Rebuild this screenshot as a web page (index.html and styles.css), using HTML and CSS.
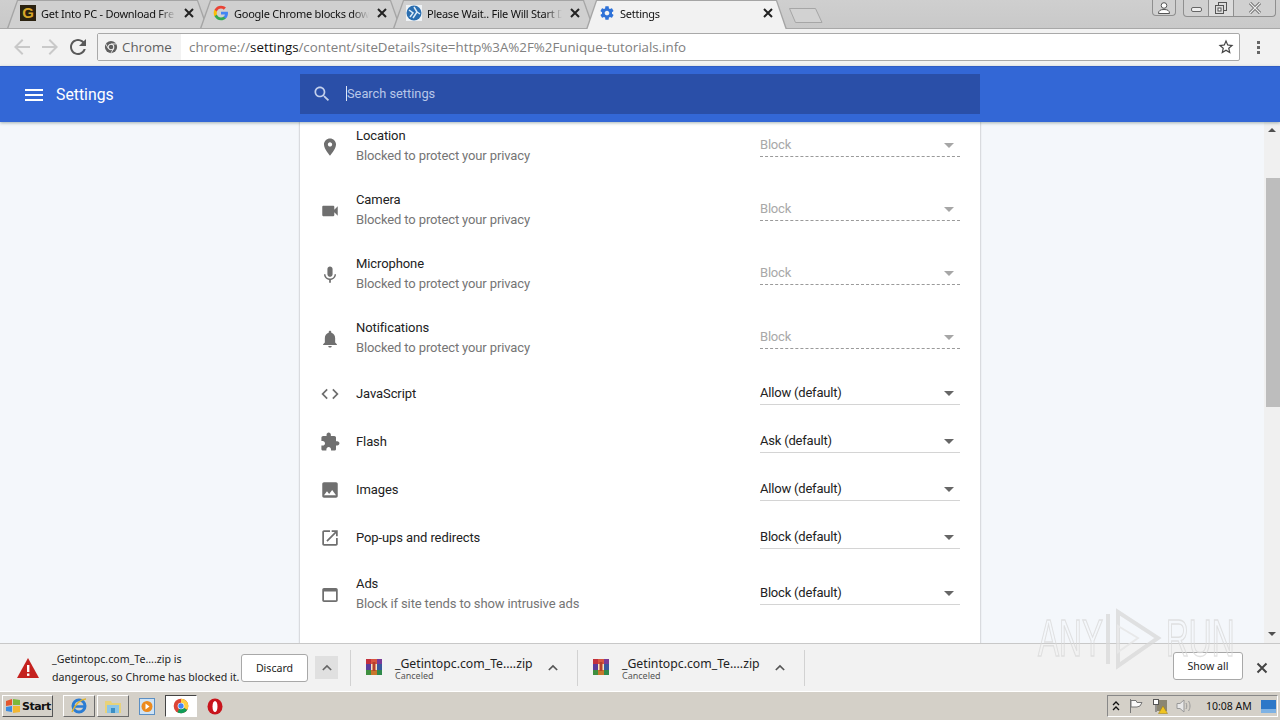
FILE: index.html
```html
<!DOCTYPE html>
<html lang="en">
<head>
<meta charset="utf-8">
<title>Settings</title>
<link rel="stylesheet" href="styles.css">
</head>
<body>
<div class="tabstrip">
  <div class="tab">
    <span class="fav fav-g">G</span>
    <span class="tab-title">Get Into PC - Download Fre</span>
    <svg class="tab-x" viewBox="0 0 10 10"><path d="M1 1l8 8M9 1L1 9"/></svg>
  </div>
  <div class="tab">
    <svg class="fav" viewBox="0 0 48 48"><path fill="#4285F4" d="M45 24.5c0-1.6-.1-3-.4-4.500H24v8.500h11.800c-.5 2.800-2 5.100-4.400 6.700v5.500h7.100c4.100-3.800 6.500-9.400 6.500-16.200z"/><path fill="#34A853" d="M24 46c5.900 0 10.900-2 14.500-5.300l-7.100-5.500c-2 1.300-4.500 2.100-7.400 2.100-5.700 0-10.500-3.800-12.200-9H4.500v5.700C8.100 41.100 15.500 46 24 46z"/><path fill="#FBBC05" d="M11.800 28.300c-.4-1.300-.7-2.800-.7-4.300s.3-3 .7-4.300V14H4.500C3 17 2 20.400 2 24s1 7 2.500 10z"/><path fill="#EA4335" d="M24 10.700c3.200 0 6.100 1.100 8.400 3.300l6.300-6.300C34.900 4.100 29.900 2 24 2 15.500 2 8.100 6.900 4.500 14l7.300 5.700c1.700-5.200 6.500-9 12.200-9z"/></svg>
    <span class="tab-title">Google Chrome blocks down</span>
    <svg class="tab-x" viewBox="0 0 10 10"><path d="M1 1l8 8M9 1L1 9"/></svg>
  </div>
  <div class="tab">
    <svg class="fav" viewBox="0 0 16 16"><rect width="16" height="16" fill="#eef2f5"/><circle cx="8" cy="8" r="7.500" fill="#2a6eb0"/><path d="M3 5l4 3-3 4M8 2l3 5-4 6M11 7l3 2" stroke="#dcebf7" stroke-width="1.500" fill="none"/></svg>
    <span class="tab-title">Please Wait.. File Will Start D</span>
    <svg class="tab-x" viewBox="0 0 10 10"><path d="M1 1l8 8M9 1L1 9"/></svg>
  </div>
  <div class="tab tab-active">
    <svg class="fav" viewBox="0 0 24 24"><path fill="#2f72d8" d="M19.430 12.980c.04-.32.07-.64.07-.98s-.03-.66-.07-.98l2.110-1.650c.19-.15.24-.42.12-.64l-2-3.460c-.12-.22-.39-.3-.61-.22l-2.490 1c-.52-.4-1.080-.73-1.690-.98l-.38-2.650C14.460 2.180 14.250 2 14 2h-4c-.25 0-.46.18-.49.42l-.38 2.650c-.61.25-1.170.59-1.690.98l-2.490-1c-.23-.09-.49 0-.61.22l-2 3.460c-.13.22-.07.49.12.64l2.110 1.650c-.04.32-.07.65-.07.98s.03.66.07.98l-2.110 1.650c-.19.15-.24.42-.12.64l2 3.460c.12.22.39.3.61.22l2.490-1c.52.4 1.080.73 1.690.98l.38 2.650c.03.24.24.42.49.42h4c.25 0 .46-.18.49-.42l.38-2.650c.61-.25 1.170-.59 1.690-.98l2.490 1c.23.09.49 0 .61-.22l2-3.460c.12-.22.07-.49-.12-.64l-2.110-1.650zM12 15.500c-1.930 0-3.500-1.570-3.500-3.500s1.570-3.500 3.500-3.500 3.500 1.570 3.500 3.500-1.570 3.500-3.500 3.500z"/></svg>
    <span class="tab-title">Settings</span>
    <svg class="tab-x" viewBox="0 0 10 10"><path d="M1 1l8 8M9 1L1 9"/></svg>
  </div>
  <svg class="newtab" width="36" height="17" viewBox="0 0 36 17"><path d="M1.500 1.500H27.500L34 15.500H7.500z" fill="#d2d2d2" stroke="#a6a6a6"/></svg>
  <div class="winbtns">
    <div class="wb wb-user"><svg width="14" height="14" viewBox="0 0 14 14"><circle cx="7" cy="4.500" r="2.800" fill="#fff" stroke="#555"/><path d="M1.500 12.500c0-3 2-4 5.500-4s5.500 1 5.500 4z" fill="#fff" stroke="#555"/></svg></div>
    <div class="wb-group">
      <div class="wb wb-min"><span class="min-glyph"></span></div>
      <div class="wb wb-max"><svg width="14" height="14" viewBox="0 0 14 14"><rect x="4.500" y="1.500" width="8" height="8" fill="#ddd" stroke="#555"/><rect x="1.500" y="4.500" width="8" height="8" fill="#ddd" stroke="#555"/><rect x="4" y="7" width="3" height="3" fill="#fff" stroke="#555"/></svg></div>
      <div class="wb wb-close"><svg width="14" height="12" viewBox="0 0 14 12"><path d="M2 1l10 10M12 1L2 11" stroke="#666" stroke-width="3"/><path d="M2 1l10 10M12 1L2 11" stroke="#eee" stroke-width="1.200"/></svg></div>
    </div>
  </div>
</div>

<div class="toolbar">
  <svg class="tool tool-off" viewBox="0 0 24 24"><path d="M20 11H7.830l5.590-5.590L12 4l-8 8 8 8 1.410-1.410L7.830 13H20v-2z"/></svg>
  <svg class="tool tool-off" viewBox="0 0 24 24"><path d="M12 4l-1.410 1.410L16.170 11H4v2h12.170l-5.580 5.590L12 20l8-8z"/></svg>
  <svg class="tool" viewBox="0 0 24 24"><path d="M17.650 6.350C16.200 4.900 14.210 4 12 4c-4.420 0-7.990 3.580-7.990 8s3.570 8 7.990 8c3.730 0 6.840-2.550 7.730-6h-2.080c-.82 2.330-3.040 4-5.650 4-3.310 0-6-2.690-6-6s2.690-6 6-6c1.660 0 3.140.69 4.220 1.780L13 11h7V4l-2.350 2.350z"/></svg>
  <div class="omnibox">
    <div class="chip">
      <svg class="chip-ico" viewBox="0 0 16 16"><circle cx="8" cy="8" r="7" fill="#5f5f5f"/><circle cx="8" cy="8" r="3.200" fill="#5f5f5f" stroke="#f2f2f2" stroke-width="1.200"/><path d="M8 4.500h6M5 9.800L2 4.500M11 9.800l-3 5" stroke="#f2f2f2"/></svg>
      <span>Chrome</span>
    </div>
    <div class="url">chrome://<b>settings</b>/content/siteDetails?site=http%3A%2F%2Funique-tutorials.info</div>
    <svg class="star" viewBox="0 0 24 24"><path d="M22 9.240l-7.190-.62L12 2 9.190 8.630 2 9.240l5.460 4.730L5.820 21 12 17.270 18.180 21l-1.630-7.030L22 9.240zM12 15.400l-3.760 2.270 1-4.280-3.320-2.880 4.380-.38L12 6.100l1.710 4.040 4.380.38-3.320 2.880 1 4.280L12 15.400z"/></svg>
  </div>
  <div class="dots"><i></i><i></i><i></i></div>
</div>

<header class="header">
  <div class="header-left">
    <svg class="hd-ico" viewBox="0 0 24 24"><path d="M3 18h18v-2H3v2zm0-5h18v-2H3v2zm0-7v2h18V6H3z"/></svg>
    <span class="hd-title">Settings</span>
  </div>
  <div class="searchbar">
    <svg class="search-ico" viewBox="0 0 24 24"><path d="M15.500 14h-.79l-.28-.27C15.410 12.590 16 11.110 16 9.500 16 5.910 13.090 3 9.500 3S3 5.910 3 9.500 5.910 16 9.500 16c1.610 0 3.090-.59 4.230-1.570l.27.28v.79l5 4.990L20.490 19l-4.990-5zm-6 0C7.010 14 5 11.990 5 9.500S7.010 5 9.500 5 14 7.010 14 9.500 11.990 14 9.500 14z"/></svg>
    <span class="caret"></span>
    <span class="search-ph">Search settings</span>
  </div>
</header>

<main class="main">
  <div class="scroller">
    <section class="card">
      <div class="row row-two">
        <svg class="row-ico" viewBox="0 0 24 24"><path d="M12 2C8.130 2 5 5.130 5 9c0 5.250 7 13 7 13s7-7.750 7-13c0-3.870-3.130-7-7-7zm0 9.500c-1.380 0-2.500-1.120-2.500-2.500s1.120-2.500 2.500-2.500 2.500 1.120 2.500 2.500-1.120 2.500-2.500 2.500z"/></svg>
        <div class="row-text"><div class="row-title">Location</div><div class="row-sub">Blocked to protect your privacy</div></div>
        <div class="select select-off"><span>Block</span><i class="arrow"></i></div>
      </div>
      <div class="row row-two">
        <svg class="row-ico" viewBox="0 0 24 24"><path d="M17 10.500V7c0-.55-.45-1-1-1H4c-.55 0-1 .45-1 1v10c0 .55.45 1 1 1h12c.55 0 1-.45 1-1v-3.500l4 4v-11l-4 4z"/></svg>
        <div class="row-text"><div class="row-title">Camera</div><div class="row-sub">Blocked to protect your privacy</div></div>
        <div class="select select-off"><span>Block</span><i class="arrow"></i></div>
      </div>
      <div class="row row-two">
        <svg class="row-ico" viewBox="0 0 24 24"><path d="M12 14c1.660 0 2.990-1.340 2.990-3L15 5c0-1.660-1.340-3-3-3S9 3.340 9 5v6c0 1.660 1.340 3 3 3zm5.300-3c0 3-2.540 5.100-5.300 5.100S6.700 14 6.700 11H5c0 3.410 2.720 6.230 6 6.720V21h2v-3.280c3.280-.48 6-3.300 6-6.720h-1.700z"/></svg>
        <div class="row-text"><div class="row-title">Microphone</div><div class="row-sub">Blocked to protect your privacy</div></div>
        <div class="select select-off"><span>Block</span><i class="arrow"></i></div>
      </div>
      <div class="row row-two">
        <svg class="row-ico" viewBox="0 0 24 24"><path d="M12 22c1.100 0 2-.9 2-2h-4c0 1.100.9 2 2 2zm6-6v-5c0-3.070-1.630-5.640-4.500-6.320V4c0-.83-.67-1.500-1.500-1.500s-1.500.67-1.500 1.500v.68C7.640 5.360 6 7.920 6 11v5l-2 2v1h16v-1l-2-2z"/></svg>
        <div class="row-text"><div class="row-title">Notifications</div><div class="row-sub">Blocked to protect your privacy</div></div>
        <div class="select select-off"><span>Block</span><i class="arrow"></i></div>
      </div>
      <div class="row">
        <svg class="row-ico" viewBox="0 0 24 24"><path d="M9.400 16.600L4.800 12l4.600-4.600L8 6l-6 6 6 6 1.400-1.400zm5.200 0l4.600-4.600-4.600-4.600L16 6l6 6-6 6-1.400-1.400z"/></svg>
        <div class="row-text"><div class="row-title">JavaScript</div></div>
        <div class="select"><span>Allow (default)</span><i class="arrow"></i></div>
      </div>
      <div class="row">
        <svg class="row-ico" viewBox="0 0 24 24"><path d="M20.500 11H19V7c0-1.100-.9-2-2-2h-4V3.500C13 2.120 11.880 1 10.500 1S8 2.120 8 3.500V5H4c-1.100 0-1.990.9-1.990 2v3.800H3.500c1.490 0 2.700 1.210 2.700 2.700s-1.210 2.700-2.700 2.700H2V20c0 1.100.9 2 2 2h3.800v-1.500c0-1.490 1.210-2.700 2.700-2.700 1.490 0 2.700 1.210 2.700 2.700V22H17c1.100 0 2-.9 2-2v-4h1.500c1.380 0 2.500-1.120 2.500-2.500S21.880 11 20.500 11z"/></svg>
        <div class="row-text"><div class="row-title">Flash</div></div>
        <div class="select"><span>Ask (default)</span><i class="arrow"></i></div>
      </div>
      <div class="row">
        <svg class="row-ico" viewBox="0 0 24 24"><path d="M21 19V5c0-1.100-.9-2-2-2H5c-1.100 0-2 .9-2 2v14c0 1.100.9 2 2 2h14c1.100 0 2-.9 2-2zM8.500 13.500l2.500 3.010L14.500 12l4.500 6H5l3.500-4.500z"/></svg>
        <div class="row-text"><div class="row-title">Images</div></div>
        <div class="select"><span>Allow (default)</span><i class="arrow"></i></div>
      </div>
      <div class="row">
        <svg class="row-ico" viewBox="0 0 24 24"><path d="M19 19H5V5h7V3H5c-1.110 0-2 .9-2 2v14c0 1.100.89 2 2 2h14c1.100 0 2-.9 2-2v-7h-2v7zM14 3v2h3.590l-9.830 9.830 1.410 1.410L19 6.410V10h2V3h-7z"/></svg>
        <div class="row-text"><div class="row-title">Pop-ups and redirects</div></div>
        <div class="select"><span>Block (default)</span><i class="arrow"></i></div>
      </div>
      <div class="row row-two">
        <svg class="row-ico" viewBox="0 0 24 24"><path d="M19 4H5c-1.110 0-2 .9-2 2v12c0 1.100.89 2 2 2h14c1.100 0 2-.9 2-2V6c0-1.100-.89-2-2-2zm0 14H5V8h14v10z"/></svg>
        <div class="row-text"><div class="row-title">Ads</div><div class="row-sub">Block if site tends to show intrusive ads</div></div>
        <div class="select"><span>Block (default)</span><i class="arrow"></i></div>
      </div>
      <div class="row row-two">
        <div class="row-ico"></div>
        <div class="row-text"><div class="row-title">Background sync</div></div>
      </div>
    </section>
  </div>
  <div class="scrollbar">
    <i class="sb-up"></i>
    <div class="sb-track"><div class="sb-thumb"></div></div>
    <i class="sb-down"></i>
  </div>
</main>

<footer class="shelf">
  <div class="dl-danger">
    <svg class="warn" width="24" height="22" viewBox="0 0 24 22"><path d="M12 1L23 21H1z" fill="#c5221f"/><rect x="11" y="8" width="2.400" height="7" fill="#fff"/><rect x="11" y="16.500" width="2.400" height="2.400" fill="#fff"/></svg>
    <div class="danger-text"><div>_Getintopc.com_Te....zip is</div><div>dangerous, so Chrome has blocked it.</div></div>
    <button class="btn btn-discard">Discard</button>
    <div class="chev-box"><svg class="chev" viewBox="0 0 12 8"><path d="M1 7l5-5 5 5" fill="none" stroke="#666" stroke-width="2"/></svg></div>
  </div>
  <div class="dl-item">
    <svg class="rar" viewBox="0 0 16 16"><rect x="0" y="0" width="5" height="5" fill="#c2303c"/><rect x="5" y="0" width="6" height="5" fill="#d8553f"/><rect x="11" y="0" width="5" height="5" fill="#7a3a96"/><rect x="0" y="5" width="5" height="6" fill="#5a3c9a"/><rect x="5" y="5" width="6" height="6" fill="#f4e6c0"/><rect x="11" y="5" width="5" height="6" fill="#39589e"/><rect x="0" y="11" width="5" height="5" fill="#3f8f3f"/><rect x="5" y="11" width="6" height="5" fill="#c9772c"/><rect x="11" y="11" width="5" height="5" fill="#2f8a4c"/><rect x="6.500" y="3" width="3" height="9" fill="#b5402c"/></svg>
    <div class="dl-text"><div class="dl-name">_Getintopc.com_Te....zip</div><div class="dl-status">Canceled</div></div>
    <svg class="chev" viewBox="0 0 12 8"><path d="M1 7l5-5 5 5" fill="none" stroke="#555" stroke-width="2"/></svg>
  </div>
  <div class="dl-item">
    <svg class="rar" viewBox="0 0 16 16"><rect x="0" y="0" width="5" height="5" fill="#c2303c"/><rect x="5" y="0" width="6" height="5" fill="#d8553f"/><rect x="11" y="0" width="5" height="5" fill="#7a3a96"/><rect x="0" y="5" width="5" height="6" fill="#5a3c9a"/><rect x="5" y="5" width="6" height="6" fill="#f4e6c0"/><rect x="11" y="5" width="5" height="6" fill="#39589e"/><rect x="0" y="11" width="5" height="5" fill="#3f8f3f"/><rect x="5" y="11" width="6" height="5" fill="#c9772c"/><rect x="11" y="11" width="5" height="5" fill="#2f8a4c"/><rect x="6.500" y="3" width="3" height="9" fill="#b5402c"/></svg>
    <div class="dl-text"><div class="dl-name">_Getintopc.com_Te....zip</div><div class="dl-status">Canceled</div></div>
    <svg class="chev" viewBox="0 0 12 8"><path d="M1 7l5-5 5 5" fill="none" stroke="#555" stroke-width="2"/></svg>
  </div>
  <div class="shelf-right">
    <button class="btn btn-showall">Show all</button>
    <svg class="shelf-x" viewBox="0 0 12 12"><path d="M1.500 1.500l9 9M10.500 1.500l-9 9" stroke="#444" stroke-width="2"/></svg>
  </div>
</footer>

<div class="taskbar">
  <button class="start">
    <svg width="16" height="16" viewBox="0 0 16 16"><path d="M1 3l6-2v6l-6 1z" fill="#e4572e"/><path d="M8 1l7 1v5l-7 0z" fill="#7cb83c"/><path d="M1 9l6-1v6l-6-1z" fill="#3b8be0"/><path d="M8 8h7v6l-7 1z" fill="#f2b632"/></svg>
    <span>Start</span>
  </button>
  <div class="quick quick-ie"><svg width="18" height="18" viewBox="0 0 18 18"><circle cx="9" cy="9" r="6" fill="none" stroke="#2b7cd3" stroke-width="3"/><path d="M3 9.500h12" stroke="#2b7cd3" stroke-width="2.500"/><path d="M2 15C5 7 11 2 16 2" stroke="#e0b431" stroke-width="1.500" fill="none"/></svg></div>
  <div class="quick"><svg width="18" height="16" viewBox="0 0 18 16"><path d="M1 3h6l1 2h9v10H1z" fill="#e8d27a"/><rect x="3" y="7" width="12" height="8" fill="#8cc6e8"/><rect x="7" y="10" width="4" height="5" fill="#3c8fc4"/></svg></div>
  <div class="tray-app tray-media"><svg width="16" height="17" viewBox="0 0 16 17"><rect x=".5" y=".5" width="15" height="16" fill="#cfe3f5" stroke="#5b8fc4"/><circle cx="8" cy="8.500" r="5.500" fill="#ec8a1e"/><path d="M6.500 5.500l4 3-4 3z" fill="#fff"/></svg></div>
  <div class="quick quick-on"><svg width="16" height="16" viewBox="0 0 48 48"><circle cx="24" cy="24" r="22" fill="#db4437"/><path d="M24 24L43 35A22 22 0 0 1 13 43z" fill="#0f9d58"/><path d="M24 2A22 22 0 0 1 43 35L24 24V2z" fill="#ffcd40"/><circle cx="24" cy="24" r="10" fill="#fff"/><circle cx="24" cy="24" r="8" fill="#4285f4"/></svg></div>
  <div class="tray-app tray-opera"><svg width="16" height="17" viewBox="0 0 16 17"><ellipse cx="8" cy="8.500" rx="7.500" ry="8" fill="#c8141c"/><ellipse cx="8" cy="8.500" rx="2.500" ry="5.500" fill="#fff"/></svg></div>
  <div class="tray">
    <svg class="tr-a" width="8" height="10" viewBox="0 0 8 10"><path d="M1 4l3-3 3 3M1 9l3-3 3 3" fill="none" stroke="#111" stroke-width="1.300"/></svg>
    <svg class="tr-b" width="16" height="16" viewBox="0 0 16 16"><path d="M2.500 1v14" stroke="#777"/><path d="M3 2.500h5l1 2h5L12 8l-3 1H3z" fill="#fafafa" stroke="#777"/></svg>
    <svg class="tr-c" width="16" height="16" viewBox="0 0 16 16"><rect x="5" y="2" width="10" height="11" fill="#8b8672"/><rect x="1.500" y="1.500" width="5" height="5" fill="#fff" stroke="#555"/><path d="M4 7v7" stroke="#555"/><path d="M11 8l4.500 7.500h-9z" fill="#f0c420" stroke="#9a7a10" stroke-width=".5"/></svg>
    <svg class="tr-d" width="16" height="16" viewBox="0 0 16 16"><path d="M1 5.500h3l4-3.500v12l-4-3.500H1z" fill="#e8e8e8" stroke="#999"/><path d="M10 5c1 1.500 1 4.500 0 6M12.500 3c2 3 2 7 0 10" fill="none" stroke="#999"/></svg>
    <span class="clock">10:08 AM</span>
    <svg class="tr-e" width="15" height="13" viewBox="0 0 15 13"><rect width="15" height="13" fill="#2d78c8"/><rect y="9" width="15" height="4" fill="#7eb2e4"/></svg>
  </div>
</div>

<div class="watermark">
  <span class="wm-text">ANY</span>
  <svg class="wm-play" width="58" height="62" viewBox="0 0 58 62"><path d="M4 6v50M14 4l40 26-40 28z" fill="none" stroke="#d9d9d9" stroke-width="4"/><path d="M14 18l20 12-20 14z" fill="none" stroke="#e4e4e4" stroke-width="2"/></svg>
  <span class="wm-text">RUN</span>
</div>
</body>
</html>
```
FILE: styles.css
```css
* { box-sizing: border-box; }
html, body { margin: 0; padding: 0; }
body {
  position: relative;
  width: 1280px;
  height: 720px;
  overflow: hidden;
  display: flex;
  flex-direction: column;
  font-family: Roboto, "Liberation Sans", sans-serif;
  background: #fff;
}
/* tab strip */
.tabstrip {
  height: 29px;
  flex: none;
  display: flex;
  align-items: flex-start;
  padding-left: 7px;
  background: linear-gradient(#cfcfcf, #c9c9c9);
  border-bottom: 1px solid #a8a8a8;
  position: relative;
}
.tab {
  position: relative;
  width: 201px;
  height: 28px;
  margin-right: -8px;
  padding: 0 0 2px 13px;
  display: flex;
  align-items: center;
  background: #a5a5a5;
  clip-path: polygon(10px 0, calc(100% - 10px) 0, 100% 100%, 0 100%);
  font-family: "Noto Sans", sans-serif;
  font-size: 11px;
  color: #111;
}
.tab::before {
  content: "";
  position: absolute;
  inset: 1px 0 0 0;
  background: #d0d0d0;
  clip-path: polygon(11px 0, calc(100% - 11px) 0, calc(100% - 1.500px) 100%, 1.500px 100%);
}
.tab > * { position: relative; }
.tab-active { z-index: 2; height: 29px; padding-bottom: 3px; }
.tab-active::before { background: #f2f2f2; }
.fav { width: 16px; height: 16px; flex: none; margin-right: 5px; }
.fav-g {
  display: block;
  background: #2b2210;
  color: #d8a628;
  font: bold 15px/16px "Liberation Sans", sans-serif;
  text-align: center;
}
.tab-title {
  width: 135px;
  flex: none;
  white-space: nowrap;
  overflow: hidden;
  letter-spacing: -.25px;
  -webkit-mask-image: linear-gradient(90deg, #000 118px, transparent 135px);
  mask-image: linear-gradient(90deg, #000 118px, transparent 135px);
}
.tab-x { width: 10px; height: 10px; flex: none; margin-left: 8px; fill: none; stroke: #222; stroke-width: 2; }
.newtab { margin: 7px 0 0 9px; flex: none; }
.winbtns { margin-left: auto; display: flex; gap: 7px; padding-right: 4px; }
.wb-group { display: flex; border: 1px solid #8f8f8f; border-top: 0; border-radius: 0 0 4px 4px; background: #d0d0d0; }
.wb { height: 16px; display: flex; align-items: center; justify-content: center; }
.wb-user { width: 24px; border: 1px solid #8f8f8f; border-top: 0; border-radius: 0 0 4px 4px; background: #d0d0d0; }
.wb-min { width: 25px; border-right: 1px solid #8f8f8f; }
.wb-max { width: 25px; border-right: 1px solid #8f8f8f; background: #dcdcdc; }
.wb-close { width: 41px; }
.min-glyph { width: 11px; height: 5px; border: 1px solid #666; border-radius: 2px; background: #eee; margin-top: 3px; }

/* toolbar */
.toolbar {
  height: 37px;
  flex: none;
  display: flex;
  align-items: center;
  padding: 0 0 1px 10px;
  background: #f2f2f2;
}
.tool { width: 24px; height: 24px; flex: none; margin-right: 4px; fill: #5a5a5a; }
.tool-off { fill: #c9c9c9; }
.omnibox {
  margin-left: 3px;
  width: 1143px;
  height: 28px;
  display: flex;
  align-items: center;
  background: #fff;
  border: 1px solid #a9a9a9;
  border-radius: 2px;
}
.chip {
  width: 83px;
  height: 26px;
  flex: none;
  display: flex;
  align-items: center;
  gap: 4px;
  padding-left: 6px;
  background: #f2f2f2;
  color: #5f5f5f;
  font-family: "Open Sans", sans-serif;
  font-size: 13.300px;
}
.chip-ico { width: 14px; height: 14px; }
.url {
  margin-left: 8px;
  font-family: "Open Sans", sans-serif;
  font-size: 13.320px;
  color: #808080;
  white-space: nowrap;
  flex: 1;
}
.url b { font-weight: 400; color: #111; }
.star { width: 18px; height: 18px; margin-right: 4px; flex: none; fill: #444; }
.dots { margin-left: 17px; display: flex; flex-direction: column; gap: 2px; }
.dots i { width: 3px; height: 3px; background: #666; display: block; }

/* header */
.header {
  height: 56px;
  flex: none;
  position: relative;
  z-index: 3;
  display: flex;
  align-items: center;
  background: #3367d6;
  border-top: 1px solid #2f5cc4;
  box-shadow: 0 1px 3px rgba(60, 90, 90, .45);
  color: #fff;
}
.header-left { width: 300px; display: flex; align-items: center; padding-left: 22px; }
.hd-ico { width: 24px; height: 24px; fill: #fff; margin-right: 10px; }
.hd-title { font-size: 15.800px; font-weight: 400; }
.searchbar {
  width: 680px;
  height: 40px;
  margin-bottom: 2px;
  display: flex;
  align-items: center;
  padding-left: 12px;
  background: #2a4fa8;
  color: #b7c7e8;
  font-size: 12.800px;
}
.search-ico { width: 20px; height: 20px; fill: #c3d0ec; margin-right: 14px; }
.caret { width: 1px; height: 15px; background: #dfe7f7; }

/* content */
.main { flex: 1; min-height: 0; display: flex; background: #f4f7fb; overflow: hidden; }
.scroller { flex: 1; padding-left: 300px; overflow: hidden; }
.card {
  width: 680px;
  margin-top: -9px;
  background: #fff;
  box-shadow: 0 0 2px rgba(0, 0, 0, .35);
}
.row { height: 48px; display: flex; align-items: center; padding: 0 20px 0 18px; }
.row-two { height: 64px; }
.row-ico { width: 24px; height: 24px; flex: none; margin: 2px 14px 0 0; fill: #6f6f6f; transform: scale(.86); }
.row-two .row-ico { margin-top: 4px; }
.row-text { flex: 1; margin-top: 2px; font-size: 13px; line-height: 20px; letter-spacing: -.1px; }
.row-title { color: #222; }
.row-sub { color: #757575; letter-spacing: -.13px; }
.select {
  width: 200px;
  height: 24px;
  display: flex;
  align-items: center;
  justify-content: space-between;
  padding-right: 6px;
  border-bottom: 1px solid #d4d4d4;
  font-size: 13px;
  letter-spacing: -.2px;
  color: #222;
}
.select-off { color: #a8a8a8; border-bottom: 1px dashed #9a9a9a; }
.arrow {
  width: 0;
  height: 0;
  margin-top: 2px;
  border-left: 5px solid transparent;
  border-right: 5px solid transparent;
  border-top: 5px solid #666;
}
.select-off .arrow { border-top-color: #a6a6a6; }
.scrollbar { width: 16px; flex: none; display: flex; flex-direction: column; align-items: center; background: #f0f0f0; }
.sb-up, .sb-down { width: 0; height: 0; flex: none; border-left: 4px solid transparent; border-right: 4px solid transparent; }
.sb-up { margin: 6px 0 5px; border-bottom: 4px solid #505050; }
.sb-down { margin: 5px 0 7px; border-top: 4px solid #505050; }
.sb-track { flex: 1; width: 100%; padding-top: 41px; }
.sb-thumb { width: 14px; height: 229px; margin-left: 2px; background: #bdbdbd; }

/* download shelf */
.shelf {
  height: 49px;
  flex: none;
  position: relative;
  z-index: 3;
  display: flex;
  align-items: center;
  background: #f2f2f2;
  border-top: 1px solid #c8c8c8;
  border-bottom: 1px solid #fff;
  font-family: "Noto Sans", sans-serif;
  font-size: 10.600px;
  color: #222;
}
.dl-danger { width: 351px; height: 36px; display: flex; align-items: center; padding-left: 16px; border-right: 1px solid #d2d2d2; }
.warn { flex: none; margin-right: 12px; }
.danger-text { width: 189px; flex: none; line-height: 18px; white-space: nowrap; }
.btn {
  height: 28px;
  padding: 0;
  background: #fff;
  border: 1px solid #a8a8a8;
  border-radius: 3px;
  font-family: "Noto Sans", sans-serif;
  font-size: 10.600px;
  color: #222;
}
.btn-discard { width: 67px; flex: none; }
.chev-box { width: 23px; height: 23px; margin-left: 7px; display: flex; align-items: center; justify-content: center; background: #e0e0e0; }
.chev { width: 10px; height: 7px; flex: none; }
.dl-item { width: 227px; height: 36px; display: flex; align-items: center; padding-left: 15px; border-right: 1px solid #d2d2d2; }
.rar { width: 16px; height: 16px; flex: none; margin-right: 13px; margin-top: -2px; }
.dl-text { width: 153px; flex: none; }
.dl-name { font-size: 12.250px; line-height: 14px; white-space: nowrap; margin-top: 2px; }
.dl-status { font-size: 9px; line-height: 10px; color: #555; }
.shelf-right { margin-left: auto; display: flex; align-items: center; padding-right: 12px; }
.btn-showall { width: 70px; margin-top: -4px; }
.shelf-x { width: 12px; height: 12px; margin-left: 13px; }

/* taskbar */
.taskbar {
  height: 28px;
  flex: none;
  display: flex;
  align-items: center;
  padding: 0 2px;
  position: relative;
  z-index: 3;
  background: #d4d0c8;
  font-size: 11px;
  color: #111;
}
.start {
  width: 51px;
  height: 22px;
  padding: 0 0 0 2px;
  display: flex;
  align-items: center;
  gap: 1px;
  background: #d4d0c8;
  border: 1px solid;
  border-color: #fff #555 #555 #fff;
  font: bold 11px "DejaVu Sans", sans-serif;
  letter-spacing: -.5px;
  color: #111;
}
.quick {
  width: 32px;
  height: 22px;
  margin-right: 2px;
  display: flex;
  align-items: center;
  justify-content: center;
  border: 1px solid;
  border-color: #fff #6b6b6b #6b6b6b #fff;
}
.quick-ie { margin-left: 10px; }
.quick-on { border-color: #444 #fff #fff #444; background: #fff; margin-right: 0; }
.tray-app { display: flex; align-items: center; }
.tray-media { margin: 0 10px 0 8px; }
.tray-opera { margin-left: 10px; }
.tray {
  margin-left: auto;
  width: 171px;
  height: 22px;
  display: flex;
  align-items: center;
  padding-left: 4px;
  border: 1px solid;
  border-color: #888 #fff #fff #888;
}
.tr-a { flex: none; }
.tr-b { margin-left: 8px; flex: none; }
.tr-c { margin-left: 8px; flex: none; }
.tr-d { margin-left: 8px; flex: none; }
.clock { margin-left: 14px; white-space: nowrap; font-family: "Noto Sans", sans-serif; font-size: 10.500px; }
.tr-e { margin-left: 9px; flex: none; }

/* watermark */
.watermark {
  position: absolute;
  left: 1038px;
  top: 608px;
  z-index: 5;
  display: flex;
  align-items: center;
  gap: 4px;
  pointer-events: none;
  opacity: .75;
}
.wm-text {
  display: block;
  width: 62px;
  font: 400 51px/62px "Liberation Sans", sans-serif;
  color: transparent;
  -webkit-text-stroke: 1.5px #d9d9d9;
  white-space: nowrap;
  transform: scaleX(.62);
  transform-origin: left center;
}
```
